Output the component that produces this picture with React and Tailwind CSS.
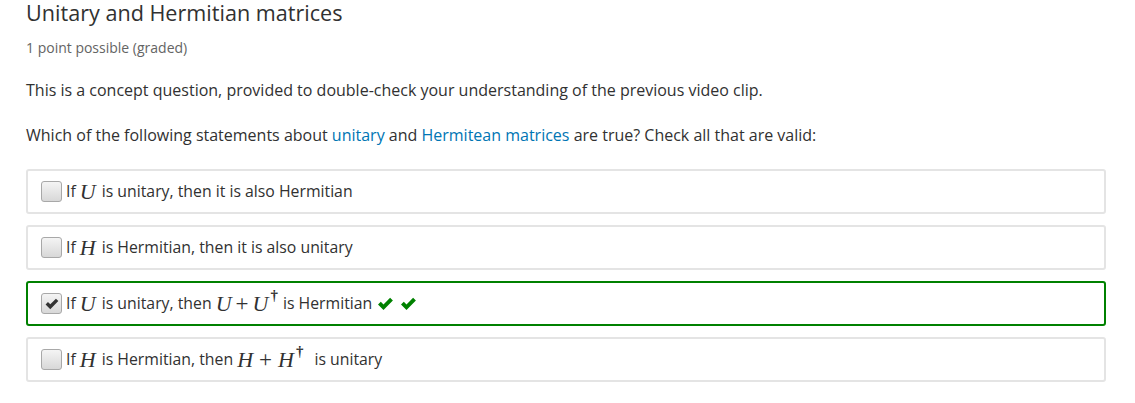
import React from "react";

const SERIF = { fontFamily: '"Liberation Serif", "DejaVu Serif", serif' };

const M = ({ children }) => (
  <span className="text-[22px] italic leading-none" style={SERIF}>
    {children}
  </span>
);

const Plus = ({ wide }) => (
  <span className={`text-[23px] leading-none ${wide ? "mx-[6px]" : "mx-[4px]"}`} style={SERIF}>+</span>
);

const Dag = () => (
  <span className="text-[15px] relative -top-[8px] ml-[2px] font-bold leading-none" style={SERIF}>†</span>
);

const Check = () => (
  <svg width="17" height="14" viewBox="0 0 16 14" className="inline-block">
    <path d="M0.5 7.5 L3.3 4.7 L6 7.4 L12.6 0.8 L15.4 3.6 L6 13 Z" fill="#008100" />
  </svg>
);

const Box = ({ checked }) => (
  <span className="inline-flex items-center justify-center w-[21px] h-[21px] rounded-[3px] border border-[#a8a8a8] bg-gradient-to-b from-[#f4f4f4] to-[#d8d8d8] mr-[4px] shrink-0">
    {checked && (
      <svg width="14" height="12" viewBox="0 0 16 14">
        <path d="M0.5 7.5 L3.3 4.7 L6 7.4 L12.6 0.8 L15.4 3.6 L6 13 Z" fill="#333" />
      </svg>
    )}
  </span>
);

const Option = ({ checked, correct, children }) => (
  <div
    className={`flex items-center h-[45px] pl-[13px] rounded-[3px] border-2 ${
      correct ? "border-[#008100]" : "border-[#e4e4e4]"
    }`}
  >
    <Box checked={checked} />
    <span className="text-[15.8px] text-[#313131] flex items-center whitespace-pre">{children}</span>
  </div>
);

export default function App() {
  return (
    <div
      className="w-[1135px] h-[403px] bg-white pl-[26px] pr-[29px] text-[#313131]"
      style={{ fontFamily: '"Open Sans", sans-serif' }}
    >
      <h2 className="text-[21.6px] leading-[26px] text-[#313131]">Unitary and Hermitian matrices</h2>
      <div className="text-[14px] text-[#646464] mt-[13px] leading-[18px]">1 point possible (graded)</div>
      <p className="text-[16px] mt-[23px] leading-[20px]">
        This is a concept question, provided to double-check your understanding of the previous video clip.
      </p>
      <p className="text-[16px] mt-[25px] leading-[20px]">
        Which of the following statements about <span className="text-[#0075b4]">unitary</span> and{" "}
        <span className="text-[#0075b4]">Hermitean matrices</span> are true? Check all that are valid:
      </p>
      <div className="mt-[24px] flex flex-col gap-[11px]">
        <Option>
          <span>{"If "}</span>
          <M>U</M>
          <span className="ml-[6px]">{"is unitary, then it is also Hermitian"}</span>
        </Option>
        <Option>
          <span>{"If "}</span>
          <M>H</M>
          <span className="ml-[6px]">{"is Hermitian, then it is also unitary"}</span>
        </Option>
        <Option checked correct>
          <span>{"If "}</span>
          <M>U</M>
          <span className="ml-[6px]">{"is unitary, then "}</span>
          <M>U</M>
          <Plus />
          <M>U</M>
          <Dag />
          <span className="ml-[5px]">{"is Hermitian "}</span>
          <span className="ml-[1px] flex items-center gap-[6px]">
            <Check />
            <Check />
          </span>
        </Option>
        <Option>
          <span>{"If "}</span>
          <M>H</M>
          <span className="ml-[6px]">{"is Hermitian, then "}</span>
          <M>H</M>
          <Plus wide />
          <M>H</M>
          <Dag />
          <span className="ml-[11px]">{"is unitary"}</span>
        </Option>
      </div>
    </div>
  );
}
